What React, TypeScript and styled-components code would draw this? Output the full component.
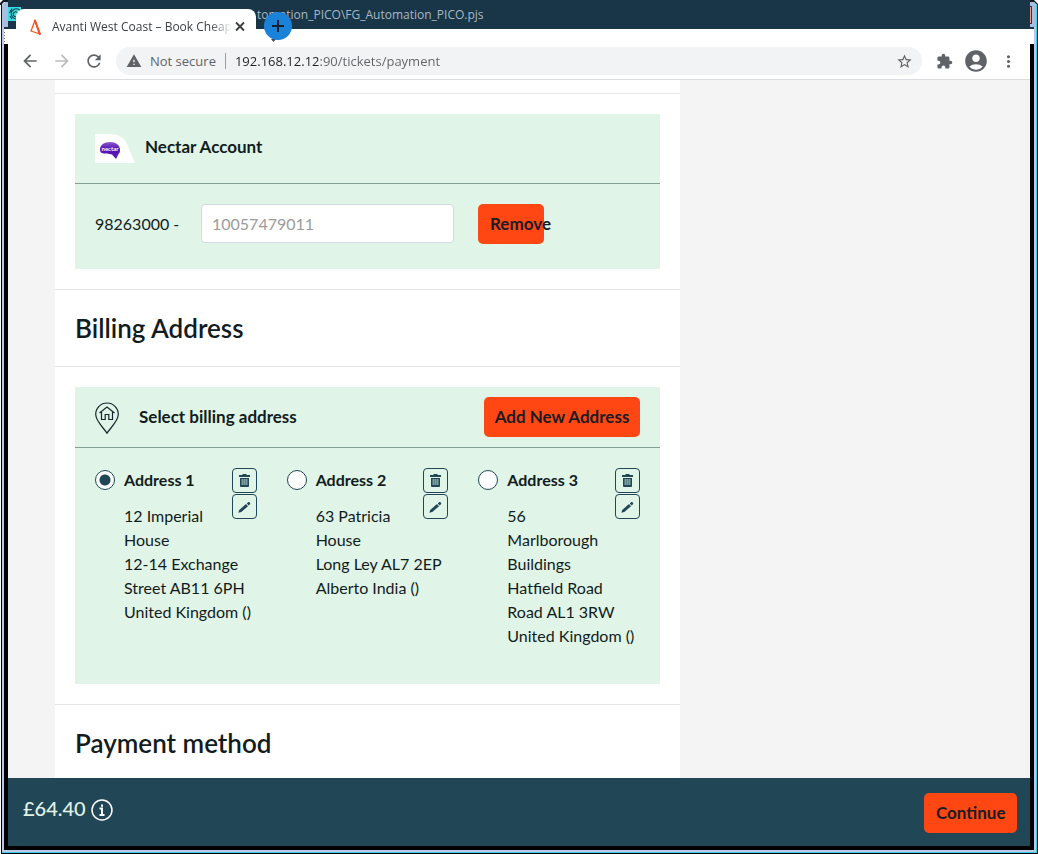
import React from 'react';
import styled, { createGlobalStyle } from 'styled-components';
import {
  MdAccountCircle,
  MdArrowBack,
  MdArrowForward,
  MdExtension,
  MdMoreVert,
  MdRefresh,
  MdStarBorder,
  MdWarning,
} from 'react-icons/md';

const color = {
  ink: '#121c20',
  navy: '#183648',
  teal: '#214655',
  mint: '#e0f4e7',
  orange: '#ff4713',
  chrome: '#5f6368',
  omnibox: '#f1f3f4',
  rule: '#e5e5e5',
};

const GlobalStyle = createGlobalStyle`
  *, *::before, *::after { box-sizing: border-box; }
  body { margin: 0; background: #fff; color: ${color.ink}; }
  body, button, input { font-family: Lato, "Liberation Sans", sans-serif; }
  button { cursor: pointer; }
`;

/* ---------- window frame ---------- */

const Frame = styled.div`
  position: relative;
  height: 100vh;
  display: flex;
  flex-direction: column;
  padding: 0 8px 8px;
  background: #000;
  box-shadow:
    inset 1px 0 #fff,
    inset -1px -1px #000,
    inset 2px 0 #000,
    inset -2px -2px #35d0e8,
    inset 4px 0 #b9c9e8,
    inset -4px -4px #b9c9e8;
`;

const FrameCap = styled.div<{ $side: 'left' | 'right' }>`
  position: absolute;
  top: 0;
  ${(p) => p.$side}: 0;
  width: 8px;
  height: 44px;
  svg { display: block; }
`;

const Header = styled.header`
  display: grid;
  grid-template-columns: minmax(0, 1fr);
  height: 44px;
  flex: none;
  background: linear-gradient(${color.navy} 29px, #fff 29px);
  font-family: "Open Sans", "Noto Sans", sans-serif;
`;

const ProjectTitle = styled.div`
  grid-area: 1 / 1;
  padding-left: 249px;
  font-size: 12px;
  line-height: 29px;
  color: #a9b8c4;
  white-space: nowrap;
`;

const AppBadge = styled.svg`
  grid-area: 1 / 1;
  margin-top: 7px;
`;

const TabStrip = styled.div`
  grid-area: 1 / 1;
  display: flex;
  align-items: flex-start;
  gap: 8px;
  padding: 9px 0 0 8px;
`;

const Tab = styled.div`
  display: flex;
  align-items: center;
  width: 240px;
  height: 35px;
  padding: 0 8px 0 12px;
  border-radius: 8px 8px 0 0;
  background: #fff;
`;

const TabTitle = styled.span`
  flex: 1;
  margin-left: 8px;
  white-space: nowrap;
  font-size: 12px;
  line-height: 18px;
  color: #3c4043;
  mask-image: linear-gradient(90deg, #000 88%, transparent);
`;

const IconButton = styled.button<{ $size?: number }>`
  display: flex;
  align-items: center;
  justify-content: center;
  flex: none;
  width: ${(p) => p.$size ?? 32}px;
  height: ${(p) => p.$size ?? 32}px;
  padding: 0;
  border: 0;
  background: none;
  color: ${color.chrome};
  &:disabled { color: #babcbe; }
`;

const NewTabButton = styled(IconButton)`
  height: 32px;
  margin-top: 3px;
`;

/* ---------- browser toolbar ---------- */

const Toolbar = styled.nav`
  display: flex;
  align-items: center;
  flex: none;
  height: 36px;
  padding: 0 6px 1px;
  border-bottom: 1px solid #dadce0;
  background: #fff;
`;

const Omnibox = styled.div`
  display: flex;
  align-items: center;
  flex: 1;
  min-width: 0;
  height: 28px;
  margin: 0 6px;
  padding: 0 2px 0 10px;
  border-radius: 14px;
  background: ${color.omnibox};
  color: ${color.chrome};
  font-family: "Open Sans", "Noto Sans", sans-serif;
  font-size: 13px;
`;

const Security = styled.span`
  margin-left: 8px;
  padding-right: 9px;
  border-right: 1px solid #9aa0a6;
  line-height: 16px;
  white-space: nowrap;
`;

const UrlInput = styled.input`
  flex: 1;
  min-width: 0;
  height: 20px;
  margin-left: 9px;
  padding: 0;
  border: 0;
  outline: 0;
  background: linear-gradient(90deg, #202124 83px, ${color.chrome} 83px);
  -webkit-background-clip: text;
  background-clip: text;
  color: transparent;
  font: inherit;
`;

/* ---------- page ---------- */

const Viewport = styled.main`
  flex: 1;
  min-height: 0;
  overflow: hidden;
  padding-left: 47px;
  background: #f4f4f4;
`;

const Column = styled.div`
  max-width: 625px;
  min-height: 100%;
  padding-top: 13px;
  background: #fff;
`;

const Section = styled.section`
  padding: 20px;
  border-top: 1px solid ${color.rule};
`;

const SectionTitle = styled.h2`
  margin: 0;
  padding: 22px 20px;
  border-top: 1px solid ${color.rule};
  font-size: 26px;
  line-height: 32px;
  font-weight: 600;
`;

const Panel = styled.div`
  background: ${color.mint};
`;

const PanelHeader = styled.div<{ $height: number }>`
  display: flex;
  align-items: center;
  height: ${(p) => p.$height}px;
  padding: 0 20px;
  border-bottom: 1px solid #82a196;
`;

const PanelTitle = styled.h3<{ $gap: number; $raised?: boolean }>`
  flex: 1;
  margin: 0 0 ${(p) => (p.$raised ? 4 : 0)}px ${(p) => p.$gap}px;
  font-size: 17px;
  line-height: 24px;
  font-weight: 700;
`;

const ActionButton = styled.button<{ $width: number; $tight?: boolean }>`
  flex: none;
  width: ${(p) => p.$width}px;
  height: 40px;
  padding: 0 ${(p) => (p.$tight ? 8 : 12)}px;
  border: 0;
  border-radius: 5px;
  background: ${color.orange};
  color: #1b1c22;
  font-size: 17px;
  font-weight: 700;
  line-height: 24px;
  text-align: center;
  white-space: nowrap;
`;

const NectarForm = styled.form`
  display: flex;
  align-items: flex-start;
  padding: 20px 20px 25px;
`;

const NectarLabel = styled.label`
  width: 106px;
  font-size: 16px;
  line-height: 40px;
`;

const NectarInput = styled.input`
  width: 253px;
  height: 39px;
  margin-right: 24px;
  padding: 0 10px;
  border: 1px solid #d3dae2;
  border-radius: 4px;
  background: #fff;
  font-size: 16px;
  &::placeholder { color: #9b9b9b; opacity: 1; }
`;

const AddressGrid = styled.div`
  display: grid;
  grid-template-columns: repeat(3, minmax(0, 1fr));
  gap: 30px;
  padding: 20px 20px 36px;
`;

const AddressCard = styled.div`
  display: grid;
  grid-template-columns: 29px 1fr 25px;
  grid-template-rows: 24px auto;
  row-gap: 12px;
`;

const Radio = styled.input`
  appearance: none;
  width: 20px;
  height: 20px;
  margin: 2px 0 0;
  border: 1px solid ${color.teal};
  border-radius: 50%;
  background: #fff;
  &:checked { background: radial-gradient(circle, ${color.teal} 5px, #fff 6px); }
`;

const AddressName = styled.label`
  font-size: 16px;
  line-height: 24px;
  font-weight: 700;
`;

const AddressLines = styled.address`
  grid-area: 2 / 2 / 3 / 4;
  font-size: 16px;
  line-height: 24px;
  font-style: normal;
  white-space: pre;
`;

const AddressActions = styled.div`
  grid-area: 1 / 3 / 3 / 4;
  align-self: start;
  display: grid;
  gap: 1px;
`;

const SquareButton = styled.button`
  display: grid;
  place-items: center;
  width: 25px;
  height: 25px;
  padding: 0;
  border: 1px solid ${color.teal};
  border-radius: 4px;
  background: none;
  color: ${color.teal};
`;

/* ---------- basket bar ---------- */

const BasketBar = styled.footer`
  display: flex;
  align-items: flex-start;
  justify-content: space-between;
  flex: none;
  height: 68px;
  padding: 15px 13px 13px 15px;
  background: ${color.teal};
`;

const Price = styled.div`
  display: flex;
  align-items: center;
  gap: 5px;
  color: ${color.mint};
  font-size: 20px;
  font-weight: 500;
  line-height: 30px;
  svg { margin-top: 4px; }
`;

/* ---------- drawings ---------- */

const AvantiMark = () => (
  <svg width="16" height="18" viewBox="0 0 16 18" fill="none" stroke="#f4511e" aria-hidden="true">
    <path d="M7 2.500L3 13l8.500 3z" strokeWidth="1.300" strokeLinejoin="round" />
    <path d="M7 2.500l5 13.500" strokeWidth="2" strokeLinecap="round" />
  </svg>
);

const CloseIcon = () => (
  <svg width="16" height="16" viewBox="0 0 16 16" fill="none" stroke="#3c4043" strokeWidth="1.800" aria-hidden="true">
    <path d="M4 3.500l8 8M12 3.500l-8 8" />
  </svg>
);

const PlusBadge = () => (
  <svg width="32" height="32" viewBox="0 0 32 32" aria-hidden="true">
    <path d="M7 27h5l-2.500 3z" fill="#43484c" />
    <circle cx="14" cy="14" r="14" fill="#1a82d9" />
    <path d="M14 8v12M8 14h12" stroke="#14212c" strokeWidth="2" />
  </svg>
);

const NectarLogo = () => (
  <svg width="40" height="29" viewBox="0 0 40 29" role="img" aria-label="nectar">
    <defs>
      <linearGradient id="nectar" x1="0" y1="0" x2="0" y2="1">
        <stop offset="0" stopColor="#8d5bd0" />
        <stop offset="0.4" stopColor="#5514b4" />
        <stop offset="1" stopColor="#5a16c0" />
      </linearGradient>
    </defs>
    <path d="M0 0h14c10 0 15 4 18 10l8 19H0z" fill="#fff" />
    <path
      d="M5 15.500c0-4.500 4-7.500 10-7.500s10 3 10 8c0 2-.5 3-1.500 4L21 25l-4-4.500c-2 0-3-1-4.500-1-5 0-7.500 0-7.500-4z"
      fill="url(#nectar)"
    />
    <text x="15" y="17" textAnchor="middle" fill="#fff" fontFamily="Lato, sans-serif" fontSize="6" fontWeight="700">
      nectar
    </text>
  </svg>
);

const HomePin = () => (
  <svg width="24" height="34" viewBox="0 0 24 34" fill="none" stroke="#14292f" strokeWidth="1.2" aria-hidden="true">
    <path d="M12 33.300C9 28 .7 21.500.7 14.300a11.300 11.300 0 0 1 22.600 0C23.300 21.500 15 28 12 33.300z" />
    <path d="M4.500 13L12 7l7.500 6M6.500 12v7.500h3.700v-5h3.600v5h3.700v-7.500" />
  </svg>
);

const TrashIcon = () => (
  <svg width="11" height="13" viewBox="0 0 11 13" aria-hidden="true">
    <path d="M3.500 0h4v1H11v2H0V1h3.500z" fill="currentColor" />
    <path d="M1 4h9v8a1 1 0 0 1-1 1H2a1 1 0 0 1-1-1z" fill="currentColor" />
    <path d="M2.500 5h6v6h-6z" fill="#7f9c9d" />
    <path d="M4.500 5v6M6.500 5v6" stroke="#5f8286" strokeWidth="1" />
  </svg>
);

const PencilIcon = () => (
  <svg width="13" height="12" viewBox="0 0 13 12" fill="currentColor" aria-hidden="true">
    <path d="M.3 11.700L1.200 9l6.800-5.900 2 2.100L3.300 11z" />
    <path d="M8.800 2.400l1.300-1.200c.5-.4 1-.3 1.400.1l.5.500c.4.400.3 1-.1 1.400L10.700 4.400z" />
  </svg>
);

const InfoIcon = () => (
  <svg width="22" height="22" viewBox="0 0 22 22" fill="none" stroke="#fff" aria-hidden="true">
    <circle cx="11" cy="11" r="10" strokeWidth="1.500" />
    <path d="M11 5.500v2.200M8.500 9.500H11v6M8.500 16h5" strokeWidth="2" />
  </svg>
);

const addresses = [
  {
    name: 'Address 1',
    lines: ['12 Imperial', 'House', '12-14 Exchange', 'Street AB11 6PH', 'United Kingdom ()'],
  },
  {
    name: 'Address 2',
    lines: ['63 Patricia', 'House', 'Long Ley AL7 2EP', 'Alberto India ()'],
  },
  {
    name: 'Address 3',
    lines: ['56', 'Marlborough', 'Buildings', 'Hatfield Road', 'Road AL1 3RW', 'United Kingdom ()'],
  },
];

export default function App() {
  return (
    <>
      <GlobalStyle />
      <Frame>
        <Header>
          <ProjectTitle>tomation_PICO\FG_Automation_PICO.pjs</ProjectTitle>
          <AppBadge width="13" height="14" viewBox="0 0 13 14" fill="none" stroke="#0e4a57" aria-hidden="true">
            <path d="M0 0h13v14H0z" fill="#3cdce6" stroke="none" />
            <path d="M12 3.500A5 5 0 1 0 11 11M9.500 5.500a2.500 2.500 0 1 0 0 3.500M4 1.500L1.500 6M2 9l2 3" strokeWidth="1.200" />
          </AppBadge>
          <TabStrip>
            <Tab>
              <AvantiMark />
              <TabTitle>Avanti West Coast – Book Cheap</TabTitle>
              <IconButton $size={16} aria-label="Close tab">
                <CloseIcon />
              </IconButton>
            </Tab>
            <NewTabButton aria-label="New tab">
              <PlusBadge />
            </NewTabButton>
          </TabStrip>
        </Header>

        <Toolbar>
          <IconButton aria-label="Back"><MdArrowBack size={20} /></IconButton>
          <IconButton aria-label="Forward" disabled><MdArrowForward size={20} /></IconButton>
          <IconButton aria-label="Reload"><MdRefresh size={20} /></IconButton>
          <Omnibox>
            <MdWarning size={16} />
            <Security>Not secure</Security>
            <UrlInput aria-label="Address" defaultValue="192.168.12.12:90/tickets/payment" />
            <IconButton aria-label="Bookmark"><MdStarBorder size={17} /></IconButton>
          </Omnibox>
          <IconButton aria-label="Extensions"><MdExtension size={17} /></IconButton>
          <IconButton aria-label="Profile"><MdAccountCircle size={26} /></IconButton>
          <IconButton aria-label="Menu"><MdMoreVert size={19} /></IconButton>
        </Toolbar>

        <Viewport>
          <Column>
            <Section>
              <Panel>
                <PanelHeader $height={70}>
                  <NectarLogo />
                  <PanelTitle $gap={10} $raised>Nectar Account</PanelTitle>
                </PanelHeader>
                <NectarForm onSubmit={(e) => e.preventDefault()}>
                  <NectarLabel htmlFor="nectar-number">98263000 -</NectarLabel>
                  <NectarInput id="nectar-number" placeholder="10057479011" />
                  <ActionButton type="button" $width={66}>Remove</ActionButton>
                </NectarForm>
              </Panel>
            </Section>

            <SectionTitle>Billing Address</SectionTitle>
            <Section>
              <Panel>
                <PanelHeader $height={61}>
                  <HomePin />
                  <PanelTitle $gap={20}>Select billing address</PanelTitle>
                  <ActionButton type="button" $width={156} $tight>Add New Address</ActionButton>
                </PanelHeader>
                <AddressGrid>
                  {addresses.map(({ name, lines }, i) => (
                    <AddressCard key={name}>
                      <Radio type="radio" name="billing" id={`address-${i}`} defaultChecked={i === 0} />
                      <AddressName htmlFor={`address-${i}`}>{name}</AddressName>
                      <AddressLines>{lines.join('\n')}</AddressLines>
                      <AddressActions>
                        <SquareButton type="button" aria-label={`Delete ${name}`}><TrashIcon /></SquareButton>
                        <SquareButton type="button" aria-label={`Edit ${name}`}><PencilIcon /></SquareButton>
                      </AddressActions>
                    </AddressCard>
                  ))}
                </AddressGrid>
              </Panel>
            </Section>

            <SectionTitle>Payment method</SectionTitle>
          </Column>
        </Viewport>

        <BasketBar>
          <Price>
            £64.40
            <InfoIcon />
          </Price>
          <ActionButton type="button" $width={93}>Continue</ActionButton>
        </BasketBar>

        <FrameCap $side="left">
          <svg width="8" height="44" viewBox="0 0 8 44" aria-hidden="true">
            <path d="M0 0h8v44H0z" fill="#fff" />
            <path d="M0 5V3l3-3h5v2H4L2 4v40H1V5z" fill="#101820" />
            <path d="M2 5l3-3h3v25H2z" fill="#a9bfde" />
            <path d="M2 27h2v17H2z" fill="#b9c9e8" />
            <path d="M4 27h4v2H4z" fill="#183648" />
            <path d="M4.500 32v12" stroke="#777" strokeDasharray="1 2" />
          </svg>
        </FrameCap>
        <FrameCap $side="right">
          <svg width="8" height="44" viewBox="0 0 8 44" aria-hidden="true">
            <path d="M0 0h8v44H0z" fill="#fff" />
            <path d="M0 0h4l4 4v40H7V5L4 2H0z" fill="#101820" />
            <path d="M0 2h4l2 3v22H0z" fill="#a9bfde" />
            <path d="M0 6h2v18H0z" fill="#5a2430" />
            <path d="M0 7h1v16H0z" fill="#e89a8a" />
            <path d="M0 27h4v2H0z" fill="#183648" />
            <path d="M4 27h2v17H4z" fill="#b9c9e8" />
            <path d="M6 4h1v40H6z" fill="#35d0e8" />
          </svg>
        </FrameCap>
      </Frame>
    </>
  );
}
